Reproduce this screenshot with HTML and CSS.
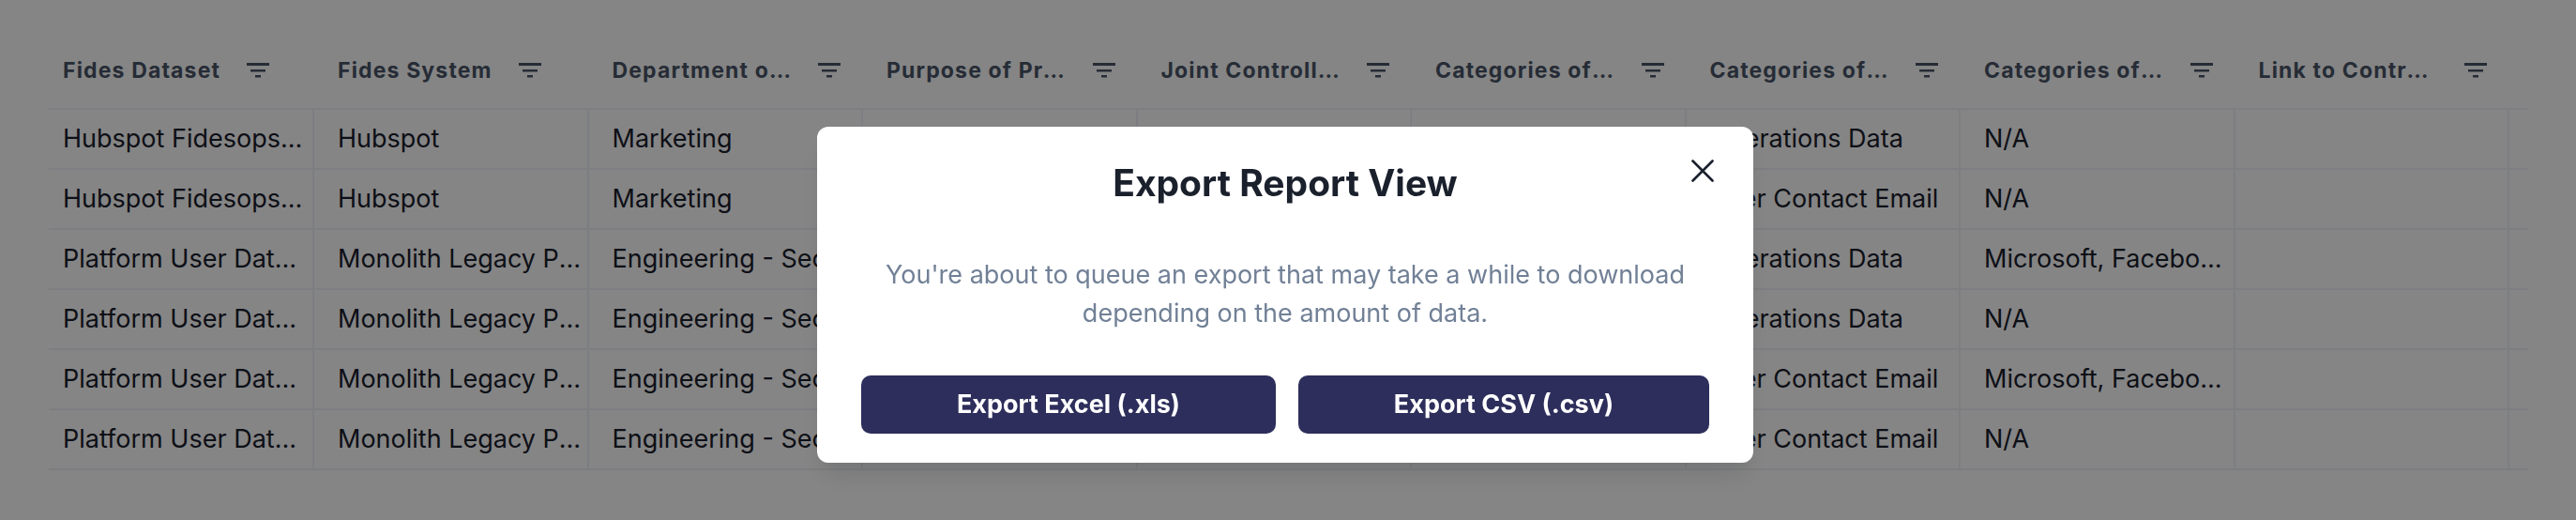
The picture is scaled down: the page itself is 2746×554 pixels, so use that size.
FILE: index.html
```
<!DOCTYPE html>
<html lang="en">
<head>
<meta charset="utf-8">
<title>Export Report View</title>
<link rel="stylesheet" href="styles.css">
</head>
<body>
<svg class="sprite" aria-hidden="true">
  <symbol id="filter" viewBox="0 0 24 16"><path d="M0 0h24v3H0zM4 7h16v2.500H4zM9 13h6v2.500H9z" fill="currentColor"/></symbol>
</svg>
<main class="report">
  <table class="grid">
    <colgroup><col class="col-first"><col><col><col><col><col><col><col><col><col class="col-last"></colgroup>
    <thead>
      <tr>
        <th><div class="head"><span class="label">Fides Dataset</span><button class="filter" aria-label="Filter Fides Dataset"><svg><use href="#filter"/></svg></button></div></th>
        <th><div class="head"><span class="label">Fides System</span><button class="filter" aria-label="Filter Fides System"><svg><use href="#filter"/></svg></button></div></th>
        <th><div class="head"><span class="label">Department or Business Function</span><button class="filter" aria-label="Filter Department"><svg><use href="#filter"/></svg></button></div></th>
        <th><div class="head"><span class="label">Purpose of Processing</span><button class="filter" aria-label="Filter Purpose of Processing"><svg><use href="#filter"/></svg></button></div></th>
        <th><div class="head"><span class="label">Joint Controllers</span><button class="filter" aria-label="Filter Joint Controllers"><svg><use href="#filter"/></svg></button></div></th>
        <th><div class="head"><span class="label">Categories of Individuals</span><button class="filter" aria-label="Filter Categories of Individuals"><svg><use href="#filter"/></svg></button></div></th>
        <th><div class="head"><span class="label">Categories of Personal Data</span><button class="filter" aria-label="Filter Categories of Personal Data"><svg><use href="#filter"/></svg></button></div></th>
        <th><div class="head"><span class="label">Categories of Recipients</span><button class="filter" aria-label="Filter Categories of Recipients"><svg><use href="#filter"/></svg></button></div></th>
        <th><div class="head"><span class="label">Link to Contract</span><button class="filter" aria-label="Filter Link to Contract"><svg><use href="#filter"/></svg></button></div></th>
        <th></th>
      </tr>
    </thead>
    <tbody>
      <tr><td>Hubspot Fidesops Dataset</td><td>Hubspot</td><td>Marketing</td><td></td><td></td><td></td><td>Operations Data</td><td>N/A</td><td></td><td></td></tr>
      <tr><td>Hubspot Fidesops Dataset</td><td>Hubspot</td><td>Marketing</td><td></td><td></td><td></td><td>User Contact Email</td><td>N/A</td><td></td><td></td></tr>
      <tr><td>Platform User Dataset</td><td>Monolith Legacy Platform</td><td>Engineering - Security</td><td></td><td></td><td></td><td>Operations Data</td><td>Microsoft, Facebook, Google</td><td></td><td></td></tr>
      <tr><td>Platform User Dataset</td><td>Monolith Legacy Platform</td><td>Engineering - Security</td><td></td><td></td><td></td><td>Operations Data</td><td>N/A</td><td></td><td></td></tr>
      <tr><td>Platform User Dataset</td><td>Monolith Legacy Platform</td><td>Engineering - Security</td><td></td><td></td><td></td><td>User Contact Email</td><td>Microsoft, Facebook, Google</td><td></td><td></td></tr>
      <tr><td>Platform User Dataset</td><td>Monolith Legacy Platform</td><td>Engineering - Security</td><td></td><td></td><td></td><td>User Contact Email</td><td>N/A</td><td></td><td></td></tr>
    </tbody>
  </table>
</main>
<div class="overlay">
  <section class="modal" role="dialog" aria-modal="true" aria-labelledby="modal-title">
    <button class="close" aria-label="Close"><svg viewBox="0 0 24 24"><path d="M1.500 1.500l21 21M22.500 1.500l-21 21" fill="none" stroke="currentColor" stroke-width="2.600" stroke-linecap="round"/></svg></button>
    <h1 class="title" id="modal-title">Export Report View</h1>
    <p class="message">You're about to queue an export that may take a while to download depending on the amount of data.</p>
    <div class="actions">
      <button class="action">Export Excel (.xls)</button>
      <button class="action">Export CSV (.csv)</button>
    </div>
  </section>
</div>
</body>
</html>
```
FILE: styles.css
```
* {
  box-sizing: border-box;
}

body {
  margin: 0;
  background: #fff;
  color: #1a202c;
  font-family: Inter, "Liberation Sans", sans-serif;
}

button {
  margin: 0;
  padding: 0;
  border: 0;
  background: none;
  color: inherit;
  font: inherit;
  cursor: pointer;
}

.sprite {
  position: absolute;
  width: 0;
  height: 0;
}

.report {
  padding: 34px 51px 0 52px;
}

.grid {
  width: 100%;
  table-layout: fixed;
  border-collapse: separate;
  border-spacing: 0;
}

.col-first {
  width: 283px;
}

.col-last {
  width: 20px;
}

th {
  padding: 0 24px 0 25px;
  border-bottom: 2px solid #edf2f7;
  color: #4a5568;
  font-size: 23px;
  font-weight: 700;
  line-height: 32px;
  letter-spacing: 0.05em;
  text-align: left;
}

td {
  height: 64px;
  padding: 0 4px 0 25px;
  border-right: 2px solid #edf2f7;
  border-bottom: 2px solid #edf2f7;
  overflow: hidden;
  font-size: 27px;
  line-height: 40px;
  text-overflow: ellipsis;
  white-space: nowrap;
}

th:first-child,
td:first-child {
  padding-left: 15px;
}

th:last-child,
td:last-child {
  padding: 0;
  border-right: 0;
}

.head {
  display: flex;
  align-items: center;
  gap: 28px;
  height: 81px;
}

.label {
  overflow: hidden;
  text-overflow: ellipsis;
  white-space: nowrap;
}

.filter {
  display: flex;
  flex: none;
}

.filter svg {
  width: 24px;
  height: 16px;
}

.overlay {
  position: fixed;
  inset: 0;
  display: flex;
  align-items: flex-start;
  justify-content: center;
  padding: 135px 6px 0 0;
  background: rgba(0, 0, 0, 0.48);
}

.modal {
  position: relative;
  width: 998px;
  max-width: 100%;
  padding: 35px 47px 31px;
  border-radius: 12px;
  background: #fff;
  box-shadow: 0 18px 27px -5px rgba(0, 0, 0, 0.1), 0 7px 11px -4px rgba(0, 0, 0, 0.05);
  text-align: center;
}

.close {
  position: absolute;
  top: 35px;
  right: 42px;
  display: flex;
}

.close svg {
  width: 24px;
  height: 24px;
}

.title {
  margin: 0 0 52px;
  font-size: 39px;
  font-weight: 700;
  line-height: 50px;
}

.message {
  margin: 0 0 46px;
  color: #718096;
  font-size: 27px;
  line-height: 41px;
}

.actions {
  display: flex;
  gap: 24px;
}

.action {
  flex: 1 1 auto;
  height: 62px;
  padding-bottom: 2px;
  border-radius: 10px;
  background: #2d2e5b;
  color: #fff;
  font-size: 27px;
  font-weight: 700;
}
```
